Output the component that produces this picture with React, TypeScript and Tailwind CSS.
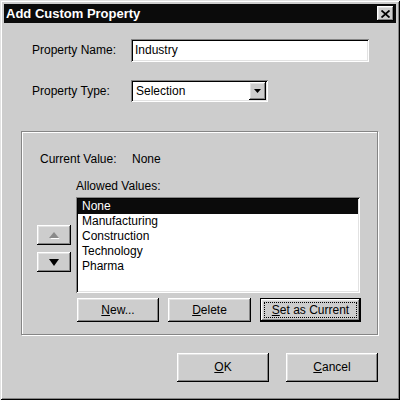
import React from "react";

const raised =
  "bg-[#cdcdcd] shadow-[inset_-1px_-1px_0_#000,inset_1px_1px_0_#fff,inset_-2px_-2px_0_#858585,inset_2px_2px_0_#e2e2e2]";
const sunken =
  "bg-white shadow-[inset_1px_1px_0_#858585,inset_-1px_-1px_0_#fff,inset_2px_2px_0_#000,inset_-2px_-2px_0_#e2e2e2]";

function Btn({
  w,
  h,
  children,
  def,
}: {
  w: string;
  h: string;
  children: React.ReactNode;
  def?: boolean;
}) {
  if (def) {
    return (
      <div className={`${w} ${h} border border-black flex`}>
        <div className={`flex-1 ${raised} flex p-[3px]`}>
          <div className="flex-1 border border-dotted border-black flex items-center justify-center">
            {children}
          </div>
        </div>
      </div>
    );
  }
  return (
    <div className={`${w} ${h} ${raised} flex items-center justify-center`}>
      {children}
    </div>
  );
}

export default function App() {
  const items = ["None", "Manufacturing", "Construction", "Technology", "Pharma"];
  return (
    <div
      className="w-[400px] h-[400px] bg-[#cdcdcd] p-[4px] text-[12px] leading-[15px] text-black shadow-[inset_1px_1px_0_#e2e2e2,inset_-1px_-1px_0_#000,inset_2px_2px_0_#fff,inset_-2px_-2px_0_#858585]"
      style={{ fontFamily: '"Liberation Sans", Arial, sans-serif' }}
    >
      {/* title bar */}
      <div className="h-[19px] bg-[#0b0b0b] flex items-center justify-between pl-[2px] pr-[2px]">
        <span className="text-white font-bold text-[13px] leading-[19px]">Add Custom Property</span>
        <div className={`w-[17px] h-[15px] ${raised} flex items-center justify-center`}>
          <svg width="9" height="8" viewBox="0 0 9 8">
            <path d="M0.5 0.5 L8.5 7.5 M8.5 0.5 L0.5 7.5" stroke="#000" strokeWidth="1.8" />
          </svg>
        </div>
      </div>

      {/* Property Name */}
      <div className="mt-[16px] ml-[28px] flex items-center h-[23px]">
        <span className="w-[99px]">Property Name:</span>
        <div className={`w-[238px] h-[23px] ${sunken} flex items-center pl-[4px]`}>Industry</div>
      </div>

      {/* Property Type */}
      <div className="mt-[18px] ml-[28px] flex items-center h-[22px]">
        <span className="w-[99px]">Property Type:</span>
        <div className={`w-[137px] h-[22px] ${sunken} flex items-center pl-[5px] pr-[2px]`}>
          <span className="flex-1">Selection</span>
          <div className={`w-[17px] h-[18px] ${raised} flex items-center justify-center`}>
            <svg width="7" height="4" viewBox="0 0 7 4">
              <path d="M0 0 H7 L3.5 4 Z" fill="#000" />
            </svg>
          </div>
        </div>
      </div>

      {/* Group box */}
      <div className="mt-[29px] ml-[17px] w-[357px] h-[204px] border border-[#858585] shadow-[inset_1px_1px_0_#fff,1px_1px_0_#fff]">
        <div className="mt-[20px] ml-[18px] flex">
          <span className="w-[92px]">Current Value:</span>
          <span>None</span>
        </div>
        <div className="mt-[12px] ml-[54px]">Allowed Values:</div>
        <div className="mt-[3px] ml-[15px] flex">
          <div className="w-[34px] flex flex-col pt-[28px] gap-[7px]">
            <div className={`h-[20px] ${raised} flex items-center justify-center`}>
              <svg width="11" height="7" viewBox="0 0 11 7">
                <path d="M5.5 1 L10.5 7 H1.5 Z" fill="#fff" />
                <path d="M5 0 L10 6 H0 Z" fill="#8a8a8a" />
              </svg>
            </div>
            <div className={`h-[20px] ${raised} flex items-center justify-center`}>
              <svg width="10" height="7" viewBox="0 0 10 7">
                <path d="M0 0 H10 L5 7 Z" fill="#000" />
              </svg>
            </div>
          </div>
          <div className={`ml-[5px] w-[284px] h-[96px] ${sunken} p-[2px] pt-[2px]`}>
            {items.map((it, i) => (
              <div
                key={it}
                className={`h-[15px] pl-[4px] leading-[15px] ${
                  i === 0 ? "bg-[#0b0b0b] text-white" : ""
                }`}
              >
                {it}
              </div>
            ))}
          </div>
        </div>
        <div className="mt-[5px] ml-[55px] flex gap-[9px]">
          <Btn w="w-[82px]" h="h-[24px]">
            <span>
              <span className="underline">N</span>ew...
            </span>
          </Btn>
          <Btn w="w-[83px]" h="h-[24px]">
            <span>
              <span className="underline">D</span>elete
            </span>
          </Btn>
          <Btn w="w-[101px]" h="h-[24px]" def>
            <span>
              <span className="underline">S</span>et as Current
            </span>
          </Btn>
        </div>
      </div>

      {/* OK / Cancel */}
      <div className="mt-[18px] ml-[173px] flex gap-[17px]">
        <Btn w="w-[92px]" h="h-[29px]">
          <span>
            <span className="underline">O</span>K
          </span>
        </Btn>
        <Btn w="w-[92px]" h="h-[29px]">
          <span>
            <span className="underline">C</span>ancel
          </span>
        </Btn>
      </div>
    </div>
  );
}
